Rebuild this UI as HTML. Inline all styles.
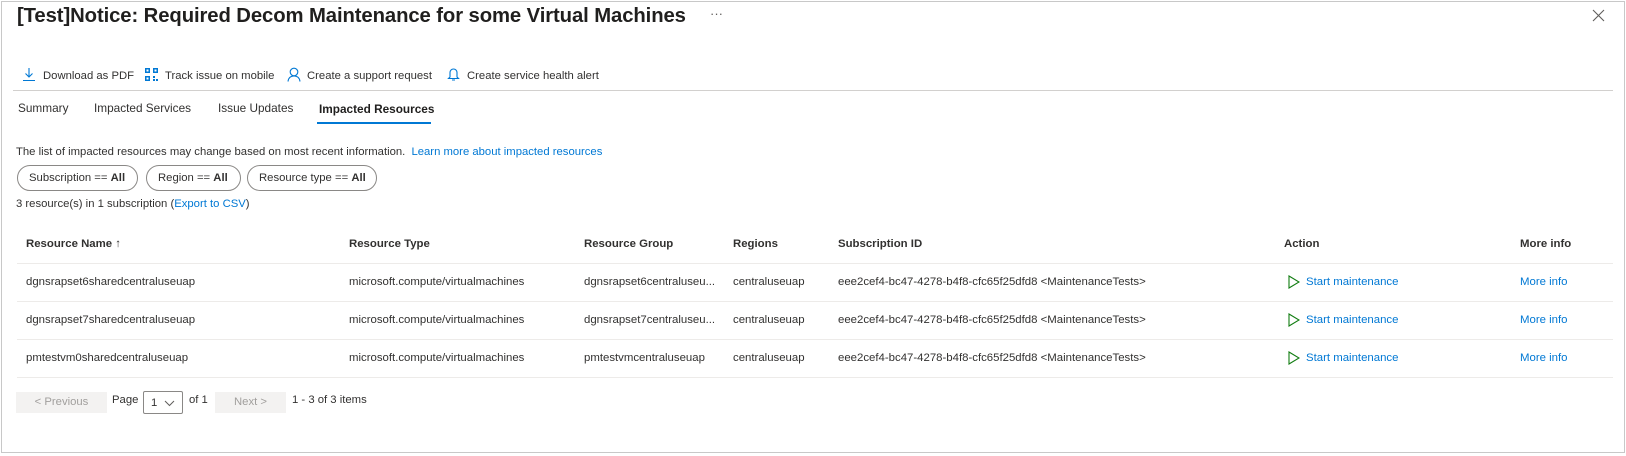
<!DOCTYPE html>
<html><head><meta charset="utf-8"><style>
*{margin:0;padding:0;box-sizing:border-box}
body{width:1626px;height:456px;background:#fff;font-family:"Liberation Sans",Arial,sans-serif;font-size:11.3px;color:#323130;position:relative;overflow:hidden}
.a{position:absolute;white-space:nowrap}
.frame{position:absolute;left:1px;top:1px;width:1624px;height:452px;border:1px solid #c8c8c8}
.title{left:17px;top:5px;font-size:20.3px;font-weight:600;color:#201f1e;letter-spacing:-0.1px}
.link{color:#0078d4}
.v{transform:translateY(-50%)}
.hline{position:absolute;left:17px;width:1596px;height:1px;background:#edebe9}
.pill{position:absolute;top:165px;height:26px;border:1px solid #8a8886;border-radius:13px;line-height:24px;padding-left:11px;font-size:11.3px}
.btn{position:absolute;top:392px;height:21px;background:#f3f2f1;color:#a19f9d;line-height:21px;text-align:center}
.th{font-weight:600}
.t{font-size:11.4px}
</style></head><body>
<div class="frame"></div>
<div class="a title">[Test]Notice: Required Decom Maintenance for some Virtual Machines</div>
<div class="a" style="left:710px;top:6px;font-size:13px;color:#605e5c">···</div>
<svg class="a" style="left:1592px;top:9px" width="13" height="13" viewBox="0 0 13 13"><path d="M1 1L12 12M12 1L1 12" stroke="#605e5c" stroke-width="1.1"/></svg>

<!-- toolbar -->
<svg class="a" style="left:22px;top:67px" width="14" height="15" viewBox="0 0 14 15"><path d="M7 1V10M3.5 6.5L7 10L10.5 6.5M1 13.5H13" stroke="#0078d4" stroke-width="1.1" fill="none"/></svg>
<div class="a v" style="left:43px;top:76px">Download as PDF</div>
<svg class="a" style="left:145px;top:68px" width="13" height="13" viewBox="0 0 13 13" fill="#0078d4"><rect x="0" y="0" width="5" height="5"/><rect x="8" y="0" width="5" height="5"/><rect x="0" y="8" width="5" height="5"/><rect x="8" y="8" width="2" height="2"/><rect x="11" y="11" width="2" height="2"/><rect x="8" y="11" width="2" height="2"/><rect x="1.5" y="1.5" width="2" height="2" fill="#fff"/><rect x="9.5" y="1.5" width="2" height="2" fill="#fff"/><rect x="1.5" y="9.5" width="2" height="2" fill="#fff"/></svg>
<div class="a v" style="left:165px;top:76px">Track issue on mobile</div>
<svg class="a" style="left:287px;top:67px" width="14" height="15" viewBox="0 0 14 15"><circle cx="7" cy="5" r="3.8" stroke="#0078d4" fill="none" stroke-width="1.1"/><path d="M1 14.5C1.5 10.5 4 9 7 9S12.5 10.5 13 14.5" stroke="#0078d4" fill="none" stroke-width="1.1"/></svg>
<div class="a v" style="left:307px;top:76px">Create a support request</div>
<svg class="a" style="left:447px;top:67px" width="13" height="15" viewBox="0 0 13 15"><path d="M3 10V5.5a3.5 3.5 0 0 1 7 0V10L11.5 11.5H1.5Z M5 13H8" stroke="#0078d4" fill="none" stroke-width="1.1"/></svg>
<div class="a v" style="left:467px;top:76px">Create service health alert</div>
<div class="a" style="left:13px;top:90px;width:1600px;height:1px;background:#d2d0ce"></div>

<!-- tabs -->
<div class="a v" style="left:18px;top:108px;font-size:11.8px">Summary</div>
<div class="a v" style="left:94px;top:108px;font-size:11.8px">Impacted Services</div>
<div class="a v" style="left:218px;top:108px;font-size:11.8px">Issue Updates</div>
<div class="a v" style="left:319px;top:109px;font-size:11.8px;font-weight:600;color:#201f1e">Impacted Resources</div>
<div class="a" style="left:317px;top:122px;width:114px;height:2px;background:#0078d4"></div>

<div class="a v" style="left:16px;top:152px">The list of impacted resources may change based on most recent information. <span class="link" style="margin-left:3px">Learn more about impacted resources</span></div>
<div class="pill" style="left:17px;width:121px">Subscription == <b>All</b></div>
<div class="pill" style="left:146px;width:95px">Region == <b>All</b></div>
<div class="pill" style="left:247px;width:130px">Resource type == <b>All</b></div>
<div class="a v" style="left:16px;top:204px">3 resource(s) in 1 subscription (<span class="link">Export to CSV</span>)</div>

<!-- table -->
<div class="a v th t" style="left:26px;top:244px">Resource Name ↑</div>
<div class="a v th t" style="left:349px;top:244px">Resource Type</div>
<div class="a v th t" style="left:584px;top:244px">Resource Group</div>
<div class="a v th t" style="left:733px;top:244px">Regions</div>
<div class="a v th t" style="left:838px;top:244px">Subscription ID</div>
<div class="a v th t" style="left:1284px;top:244px">Action</div>
<div class="a v th t" style="left:1520px;top:244px">More info</div>
<div class="hline" style="top:263px"></div>
<div class="hline" style="top:301px"></div>
<div class="hline" style="top:339px"></div>
<div class="hline" style="top:377px"></div>

<div class="a v t" style="left:26px;top:282px">dgnsrapset6sharedcentraluseuap</div>
<div class="a v t" style="left:349px;top:282px">microsoft.compute/virtualmachines</div>
<div class="a v t" style="left:584px;top:282px">dgnsrapset6centraluseu...</div>
<div class="a v t" style="left:733px;top:282px">centraluseuap</div>
<div class="a v t" style="left:838px;top:282px">eee2cef4-bc47-4278-b4f8-cfc65f25dfd8 &lt;MaintenanceTests&gt;</div>

<div class="a v t" style="left:26px;top:320px">dgnsrapset7sharedcentraluseuap</div>
<div class="a v t" style="left:349px;top:320px">microsoft.compute/virtualmachines</div>
<div class="a v t" style="left:584px;top:320px">dgnsrapset7centraluseu...</div>
<div class="a v t" style="left:733px;top:320px">centraluseuap</div>
<div class="a v t" style="left:838px;top:320px">eee2cef4-bc47-4278-b4f8-cfc65f25dfd8 &lt;MaintenanceTests&gt;</div>

<div class="a v t" style="left:26px;top:358px">pmtestvm0sharedcentraluseuap</div>
<div class="a v t" style="left:349px;top:358px">microsoft.compute/virtualmachines</div>
<div class="a v t" style="left:584px;top:358px">pmtestvmcentraluseuap</div>
<div class="a v t" style="left:733px;top:358px">centraluseuap</div>
<div class="a v t" style="left:838px;top:358px">eee2cef4-bc47-4278-b4f8-cfc65f25dfd8 &lt;MaintenanceTests&gt;</div>

<svg class="a" style="left:1288px;top:275px" width="12" height="14" viewBox="0 0 12 14"><path d="M1 1L11 7L1 13Z" stroke="#107c10" fill="none" stroke-width="1.1"/></svg>
<div class="a v link t" style="left:1306px;top:282px">Start maintenance</div>
<svg class="a" style="left:1288px;top:313px" width="12" height="14" viewBox="0 0 12 14"><path d="M1 1L11 7L1 13Z" stroke="#107c10" fill="none" stroke-width="1.1"/></svg>
<div class="a v link t" style="left:1306px;top:320px">Start maintenance</div>
<svg class="a" style="left:1288px;top:351px" width="12" height="14" viewBox="0 0 12 14"><path d="M1 1L11 7L1 13Z" stroke="#107c10" fill="none" stroke-width="1.1"/></svg>
<div class="a v link t" style="left:1306px;top:358px">Start maintenance</div>
<div class="a v link t" style="left:1520px;top:282px">More info</div>
<div class="a v link t" style="left:1520px;top:320px">More info</div>
<div class="a v link t" style="left:1520px;top:358px">More info</div>

<!-- pagination -->
<div class="btn" style="left:16px;width:91px">&lt; Previous</div>
<div class="a v" style="left:112px;top:400px">Page</div>
<div class="a" style="left:143px;top:391px;width:40px;height:23px;border:1px solid #8a8886;border-radius:2px"></div>
<div class="a v" style="left:151px;top:403px">1</div>
<svg class="a" style="left:164px;top:400px" width="11" height="7" viewBox="0 0 11 7"><path d="M1 1L5.5 5.5L10 1" stroke="#605e5c" fill="none"/></svg>
<div class="a v" style="left:189px;top:400px">of 1</div>
<div class="btn" style="left:215px;width:71px">Next &gt;</div>
<div class="a v" style="left:292px;top:400px">1 - 3 of 3 items</div>
</body></html>
